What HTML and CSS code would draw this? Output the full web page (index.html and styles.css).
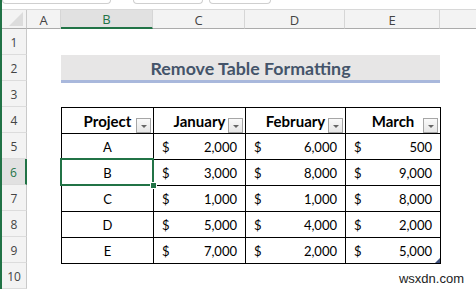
FILE: index.html
```html
<!DOCTYPE html>
<html>
<head>
<meta charset="utf-8">
<link rel="stylesheet" href="styles.css">
</head>
<body>
<div class="app">
  <div class="edge"></div>
  <div class="sheet">
    <div class="topbar">
      <span class="pill p1"></span>
      <span class="pill p2"></span>
      <span class="pill p3"></span>
    </div>
    <div class="grid">
      <div class="corner"><svg width="14" height="14" viewBox="0 0 14 14"><polygon points="14,0 14,14 0,14" fill="#dcdcdc"/></svg></div>
      <div class="ch">A</div>
      <div class="ch sel">B</div>
      <div class="ch">C</div>
      <div class="ch">D</div>
      <div class="ch">E</div>
      <div class="ch last"></div>

      <div class="rh">1</div>
      <div class="rh">2</div>
      <div class="rh">3</div>
      <div class="rh">4</div>
      <div class="rh">5</div>
      <div class="rh sel">6</div>
      <div class="rh">7</div>
      <div class="rh">8</div>
      <div class="rh">9</div>
      <div class="rh">10</div>

      <div class="title">Remove Table Formatting</div>

      <div class="table">
        <div class="th">Project<span class="dd"></span></div>
        <div class="th">January<span class="dd"></span></div>
        <div class="th">February<span class="dd"></span></div>
        <div class="th">March<span class="dd"></span></div>

        <div class="td c">A</div>
        <div class="td m"><span>$</span><span>2,000</span></div>
        <div class="td m"><span>$</span><span>6,000</span></div>
        <div class="td m"><span>$</span><span>500</span></div>

        <div class="td c">B</div>
        <div class="td m"><span>$</span><span>3,000</span></div>
        <div class="td m"><span>$</span><span>8,000</span></div>
        <div class="td m"><span>$</span><span>9,000</span></div>

        <div class="td c">C</div>
        <div class="td m"><span>$</span><span>1,000</span></div>
        <div class="td m"><span>$</span><span>1,000</span></div>
        <div class="td m"><span>$</span><span>8,000</span></div>

        <div class="td c">D</div>
        <div class="td m"><span>$</span><span>5,000</span></div>
        <div class="td m"><span>$</span><span>4,000</span></div>
        <div class="td m"><span>$</span><span>2,000</span></div>

        <div class="td c">E</div>
        <div class="td m"><span>$</span><span>7,000</span></div>
        <div class="td m"><span>$</span><span>2,000</span></div>
        <div class="td m end"><span>$</span><span>5,000</span></div>
      </div>

      <div class="selbox"></div>

      <div class="mark">wsxdn.com</div>
    </div>
  </div>
</div>
</body>
</html>
```
FILE: styles.css
```css
html, body {
  margin: 0;
  padding: 0;
  background: #ffffff;
}
.app {
  display: flex;
  width: 476px;
  height: 289px;
  overflow: hidden;
}
.edge {
  width: 2px;
  flex: none;
  background: #217346;
}
.sheet {
  flex: 1;
  display: flex;
  flex-direction: column;
  min-width: 0;
}
.topbar {
  height: 9px;
  flex: none;
  border-bottom: 1px solid #d8d8d8;
  display: flex;
  align-items: flex-start;
}
.pill {
  height: 3px;
  border: 1px solid #cfcfcf;
  border-top: none;
  border-radius: 0 0 4px 4px;
}
.p1 { width: 107px; margin-left: 0; }
.p2 { width: 68px; margin-left: 22px; }
.p3 { width: 60px; margin-left: 6px; }

.grid {
  display: grid;
  grid-template-columns: 25px 34px 92px 92px 100px 95px 1fr;
  grid-template-rows: 19px repeat(10, 26px);
  font-family: "Open Sans", "Noto Sans", sans-serif;
}
.corner {
  background: #f3f3f3;
  border-right: 1px solid #c9c9c9;
  border-bottom: 1px solid #ababab;
  display: flex;
  align-items: flex-end;
  justify-content: flex-end;
  padding: 0 3px 2px 0;
}
.ch {
  background: #f3f3f3;
  border-right: 1px solid #d6d6d6;
  border-bottom: 1px solid #ababab;
  display: flex;
  align-items: center;
  justify-content: center;
  font-size: 13px;
  color: #444444;
  padding-top: 1px;
}
.ch.sel {
  background: #e1e1e1;
  color: #217346;
  border-bottom: 2px solid #217346;
}
.ch.last { border-right: none; }
.rh {
  grid-column: 1;
  background: #f3f3f3;
  border-right: 1px solid #c9c9c9;
  border-bottom: 1px solid #dcdcdc;
  display: flex;
  align-items: center;
  justify-content: center;
  font-size: 12px;
  color: #444444;
  padding-top: 2px;
}
.rh.sel {
  background: #e1e1e1;
  color: #217346;
  border-right: 2px solid #217346;
}

.title {
  grid-row: 3;
  grid-column: 3 / 7;
  align-self: start;
  height: 28px;
  box-sizing: border-box;
  background: #e7e6e6;
  border-bottom: 3px solid #a9b8dc;
  display: flex;
  align-items: center;
  justify-content: center;
  font-family: Lato, "Open Sans", sans-serif;
  font-weight: 700;
  font-size: 17.8px;
  color: #44546a;
  padding-top: 1px;
}

.table {
  grid-row: 5 / 11;
  grid-column: 3 / 7;
  align-self: start;
  justify-self: start;
  width: 380px;
  height: 157px;
  box-sizing: border-box;
  padding: 1px;
  display: grid;
  grid-template-columns: 91px 91px 99px 94px;
  grid-template-rows: repeat(6, 25px);
  gap: 1px;
  background: #000000;
  font-family: Lato, "Open Sans", sans-serif;
  color: #000000;
}
.th {
  background: #ffffff;
  position: relative;
  display: flex;
  align-items: center;
  justify-content: center;
  font-weight: 700;
  font-size: 15px;
  padding-top: 1px;
}
.dd {
  position: absolute;
  right: 2px;
  bottom: 0;
  width: 13px;
  height: 13px;
  border: 1px solid #a6a6a6;
  background: linear-gradient(#fafafa, #e6e6e6);
}
.dd::after {
  content: "";
  position: absolute;
  left: 4px;
  top: 6px;
  border-left: 3px solid transparent;
  border-right: 3px solid transparent;
  border-top: 3px solid #666666;
}
.td {
  background: #ffffff;
  font-size: 13px;
  display: flex;
  align-items: center;
  padding-top: 1px;
}
.td.c { justify-content: center; }
.td.m {
  justify-content: space-between;
  padding: 1px 8px 0 8px;
}
.td.end { position: relative; }
.td.end::after {
  content: "";
  position: absolute;
  right: 0;
  bottom: 0;
  border-left: 5px solid transparent;
  border-bottom: 5px solid #3d4f7c;
}

.selbox {
  grid-row: 7;
  grid-column: 3;
  position: relative;
  z-index: 2;
}
.selbox::before {
  content: "";
  position: absolute;
  top: -1px;
  left: -1px;
  right: -1px;
  bottom: -1px;
  border: 2px solid #217346;
}
.selbox::after {
  content: "";
  position: absolute;
  right: -4px;
  bottom: -4px;
  width: 5px;
  height: 5px;
  background: #217346;
  border: 1px solid #ffffff;
}

.mark {
  grid-row: 11;
  grid-column: 6 / 8;
  justify-self: end;
  align-self: center;
  padding: 4px 12px 0 0;
  font-family: "Liberation Sans", Arial, sans-serif;
  font-size: 13px;
  color: #222222;
}
```
